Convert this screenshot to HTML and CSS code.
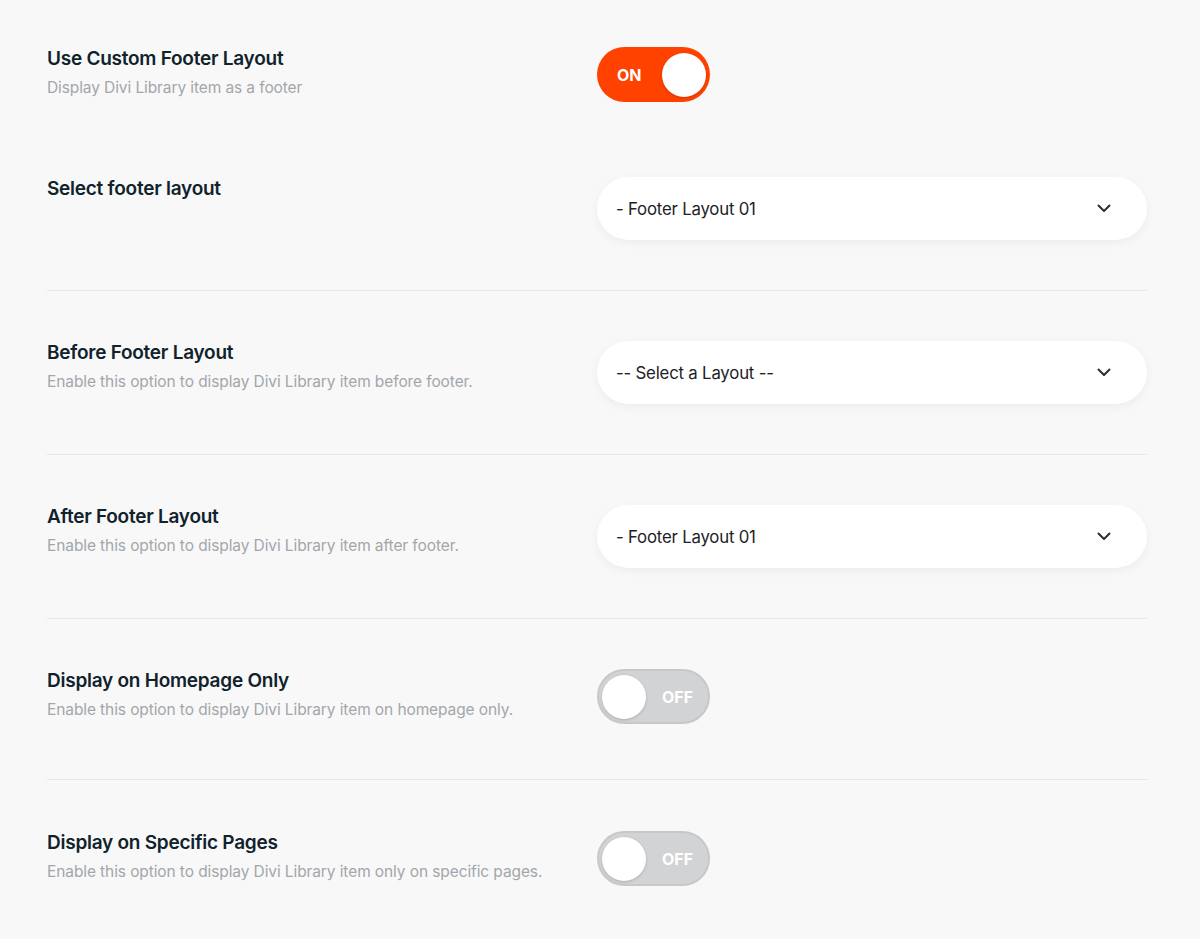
FILE: index.html
```html
<!DOCTYPE html>
<html>
<head>
<meta charset="utf-8">
<link rel="stylesheet" href="styles.css">
</head>
<body>
<div class="page">
  <div class="section first">
    <div class="row row-gap">
      <div class="label">
        <div class="title">Use Custom Footer Layout</div>
        <div class="desc">Display Divi Library item as a footer</div>
      </div>
      <div class="control">
        <div class="toggle on"><span class="toggle-text">ON</span><span class="knob"></span></div>
      </div>
    </div>
    <div class="row">
      <div class="label">
        <div class="title">Select footer layout</div>
      </div>
      <div class="control">
        <div class="select"><span>- Footer Layout 01</span>
          <svg class="chev" width="14" height="9" viewBox="0 0 14 9"><path d="M1.5 1.5 L7 7 L12.5 1.5" fill="none" stroke="#2b2f33" stroke-width="2" stroke-linecap="round" stroke-linejoin="round"/></svg>
        </div>
      </div>
    </div>
  </div>
  <div class="section">
    <div class="row">
      <div class="label">
        <div class="title">Before Footer Layout</div>
        <div class="desc">Enable this option to display Divi Library item before footer.</div>
      </div>
      <div class="control">
        <div class="select"><span>-- Select a Layout --</span>
          <svg class="chev" width="14" height="9" viewBox="0 0 14 9"><path d="M1.5 1.5 L7 7 L12.5 1.5" fill="none" stroke="#2b2f33" stroke-width="2" stroke-linecap="round" stroke-linejoin="round"/></svg>
        </div>
      </div>
    </div>
  </div>
  <div class="section">
    <div class="row">
      <div class="label">
        <div class="title">After Footer Layout</div>
        <div class="desc">Enable this option to display Divi Library item after footer.</div>
      </div>
      <div class="control">
        <div class="select"><span>- Footer Layout 01</span>
          <svg class="chev" width="14" height="9" viewBox="0 0 14 9"><path d="M1.5 1.5 L7 7 L12.5 1.5" fill="none" stroke="#2b2f33" stroke-width="2" stroke-linecap="round" stroke-linejoin="round"/></svg>
        </div>
      </div>
    </div>
  </div>
  <div class="section">
    <div class="row">
      <div class="label">
        <div class="title">Display on Homepage Only</div>
        <div class="desc">Enable this option to display Divi Library item on homepage only.</div>
      </div>
      <div class="control">
        <div class="toggle off"><span class="knob"></span><span class="toggle-text">OFF</span></div>
      </div>
    </div>
  </div>
  <div class="section last">
    <div class="row">
      <div class="label">
        <div class="title">Display on Specific Pages</div>
        <div class="desc">Enable this option to display Divi Library item only on specific pages.</div>
      </div>
      <div class="control">
        <div class="toggle off"><span class="knob"></span><span class="toggle-text">OFF</span></div>
      </div>
    </div>
  </div>
</div>
</body>
</html>
```

FILE: styles.css
```css
html, body {
  margin: 0;
  padding: 0;
  background: #f8f8f8;
}
body {
  font-family: "Inter", "Liberation Sans", sans-serif;
  height: 939px;
  overflow: hidden;
}
.page {
  padding: 47px 51px 0 47px;
  width: 1100px;
}
.section {
  padding: 50px 0;
  border-top: 1px solid #e7e7e7;
}
.section.first {
  padding-top: 0;
  border-top: none;
}
.section.last {
  padding-top: 51px;
}
.row {
  display: flex;
  align-items: flex-start;
}
.row-gap {
  margin-bottom: 70px;
}
.label {
  width: 550px;
  min-height: 60px;
}
.title {
  font-size: 19px;
  line-height: 24px;
  font-weight: 600;
  color: #10222b;
  letter-spacing: -0.25px;
}
.desc {
  margin-top: 5px;
  font-size: 15.5px;
  line-height: 24px;
  color: #a3a6ab;
  letter-spacing: -0.1px;
}
.control {
  width: 550px;
}
.select {
  height: 63px;
  background: #ffffff;
  border-radius: 32px;
  box-shadow: 0 3px 10px rgba(0, 0, 0, 0.05);
  display: flex;
  align-items: center;
  justify-content: space-between;
  padding: 0 36px 0 19px;
  font-size: 16.8px;
  color: #1e2226;
  letter-spacing: -0.2px;
}
.chev {
  display: block;
}
.toggle {
  width: 113px;
  height: 55px;
  box-sizing: border-box;
  border-radius: 28px;
  display: flex;
  align-items: center;
  position: relative;
}
.toggle.on {
  background: #ff4200;
  padding: 0 4px 0 20px;
  justify-content: space-between;
}
.toggle.off {
  background: #d2d3d5;
  border: 2px solid #c7c8ca;
  padding: 0 0 0 3px;
}
.toggle-text {
  font-size: 16px;
  font-weight: 700;
  color: #ffffff;
}
.toggle.off .toggle-text {
  margin-left: 16px;
}
.knob {
  width: 44px;
  height: 44px;
  border-radius: 50%;
  background: #ffffff;
  box-shadow: 0 1px 3px rgba(0, 0, 0, 0.18);
}
```
